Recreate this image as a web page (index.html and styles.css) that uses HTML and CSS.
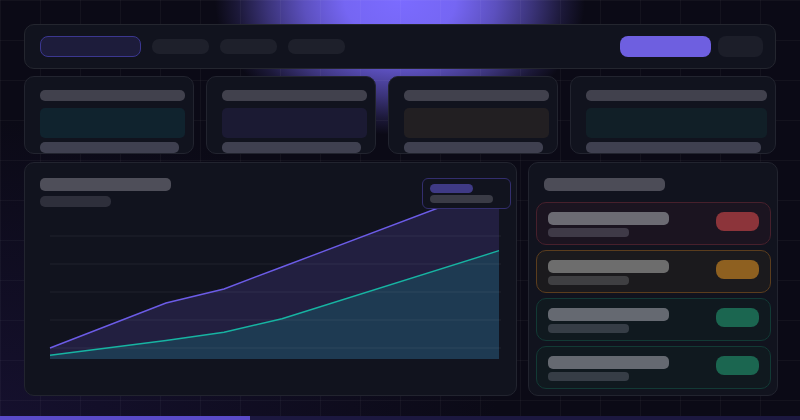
FILE: index.html
```html
<!DOCTYPE html>
<html lang="en">
<head>
<meta charset="utf-8">
<title>Dashboard</title>
<link rel="stylesheet" href="styles.css">
</head>
<body>
<div class="page">
  <header class="topbar">
    <div class="brand"></div>
    <nav class="nav">
      <span class="nav-pill"></span>
      <span class="nav-pill"></span>
      <span class="nav-pill"></span>
    </nav>
    <div class="actions">
      <span class="btn-primary"></span>
      <span class="btn-ghost"></span>
    </div>
  </header>

  <section class="stats">
    <div class="stat">
      <div class="stat-title"></div>
      <div class="stat-block teal"></div>
      <div class="stat-foot"></div>
    </div>
    <div class="stat">
      <div class="stat-title"></div>
      <div class="stat-block indigo"></div>
      <div class="stat-foot"></div>
    </div>
    <div class="stat">
      <div class="stat-title"></div>
      <div class="stat-block brown"></div>
      <div class="stat-foot"></div>
    </div>
    <div class="stat">
      <div class="stat-title"></div>
      <div class="stat-block green"></div>
      <div class="stat-foot"></div>
    </div>
  </section>

  <section class="lower">
    <div class="panel chart-panel">
      <div class="chart-title"></div>
      <div class="chart-sub"></div>
      <svg class="chart" width="450" height="152" viewBox="0 0 450 152">
        <polygon class="area-purple" points="0,141 116,96 174,82 232,60 449,-22 449,152 0,152"/>
        <polygon class="area-teal" points="0,148.3 116,133.5 174,125.3 232,111.7 449,43.7 449,152 0,152"/>
        <g class="grid">
          <line x1="0" y1="29" x2="451" y2="29"/>
          <line x1="0" y1="57" x2="451" y2="57"/>
          <line x1="0" y1="85" x2="451" y2="85"/>
          <line x1="0" y1="113" x2="451" y2="113"/>
          <line x1="0" y1="141" x2="451" y2="141"/>
        </g>
        <polyline class="line-purple" points="0,141 116,96 174,82 232,60 449,-22"/>
        <polyline class="line-teal" points="0,148.3 116,133.5 174,125.3 232,111.7 449,43.7"/>
      </svg>
      <div class="legend">
        <span class="legend-pill"></span>
        <span class="legend-bar"></span>
      </div>
    </div>

    <div class="panel list-panel">
      <div class="list-title"></div>
      <div class="items">
        <div class="item red">
          <div class="item-text"><span class="item-main"></span><span class="item-sub"></span></div>
          <span class="badge"></span>
        </div>
        <div class="item amber">
          <div class="item-text"><span class="item-main"></span><span class="item-sub"></span></div>
          <span class="badge"></span>
        </div>
        <div class="item mint">
          <div class="item-text"><span class="item-main"></span><span class="item-sub"></span></div>
          <span class="badge"></span>
        </div>
        <div class="item mint">
          <div class="item-text"><span class="item-main"></span><span class="item-sub"></span></div>
          <span class="badge"></span>
        </div>
      </div>
    </div>
  </section>

  <div class="progress"><div class="progress-fill"></div></div>
</div>
</body>
</html>
```

FILE: styles.css
```css
* { box-sizing: border-box; }

html, body {
  margin: 0;
  width: 800px;
  height: 420px;
  overflow: hidden;
}

body {
  font-family: "Inter", "Liberation Sans", sans-serif;
  background-color: #0b0a16;
  background-image:
    linear-gradient(to right, rgba(255,255,255,0.035) 1px, transparent 1px),
    linear-gradient(to bottom, rgba(255,255,255,0.035) 1px, transparent 1px),
    radial-gradient(ellipse 185px 135px at 400px 0px,
      #7b6bff 0%, rgba(123,107,255,0.95) 30%, rgba(123,107,255,0.72) 52%,
      rgba(123,107,255,0.42) 72%, rgba(123,107,255,0.15) 88%, rgba(123,107,255,0) 100%),
    radial-gradient(ellipse 500px 300px at 0px 420px, rgba(40,28,90,0.35), rgba(40,28,90,0));
  background-size: 40px 40px, 40px 40px, 100% 100%, 100% 100%;
  background-position: 0 0, 0 0, 0 0, 0 0;
  background-repeat: repeat, repeat, no-repeat, no-repeat;
}

.page {
  padding: 24px 0 0 24px;
  width: 776px;
}

/* ---------- header ---------- */
.topbar {
  height: 45px;
  display: flex;
  align-items: center;
  padding: 0 12px 0 15px;
  background: #11131e;
  border: 1px solid #24262f;
  border-radius: 10px;
}
.brand {
  width: 101px;
  height: 21px;
  background: #1d1c3b;
  border: 1px solid #3b3790;
  border-radius: 8px;
}
.nav {
  display: flex;
  gap: 11px;
  margin-left: 11px;
}
.nav-pill {
  width: 57px;
  height: 15px;
  background: #1e202b;
  border-radius: 7px;
}
.actions {
  margin-left: auto;
  display: flex;
  gap: 7px;
}
.btn-primary {
  width: 91px;
  height: 21px;
  background: #6e5fe0;
  border-radius: 8px;
}
.btn-ghost {
  width: 45px;
  height: 21px;
  background: #1c1e29;
  border-radius: 8px;
}

/* ---------- stat cards ---------- */
.stats {
  margin-top: 7px;
  display: grid;
  grid-template-columns: 170px 170px 170px 206px;
  gap: 12px;
}
.stat {
  height: 78px;
  background: #11131e;
  border: 1px solid #22242f;
  border-radius: 10px;
  padding: 13px 8px 0 15px;
  display: flex;
  flex-direction: column;
}
.stat-title {
  height: 13px;
  background: #41414d;
  border-radius: 5px;
}
.stat-block {
  height: 36px;
  margin-top: 7px;
  border-radius: 5px;
}
.stat-block.teal { background: #10232e; }
.stat-block.indigo { background: #1b1a33; }
.stat-block.brown { background: #221f22; }
.stat-block.green { background: #111f27; }
.stat-foot {
  flex: none;
  height: 11px;
  margin-top: 4px;
  margin-right: 6px;
  background: rgba(110,110,130,0.5);
  border-radius: 5px;
}

/* ---------- lower ---------- */
.lower {
  margin-top: 8px;
  display: grid;
  grid-template-columns: 493px 250px;
  gap: 11px;
}
.panel {
  height: 234px;
  background: #11131e;
  border: 1px solid #22242f;
  border-radius: 10px;
}

.chart-panel {
  position: relative;
  padding: 15px 15px 0 15px;
}
.chart-title {
  width: 131px;
  height: 13px;
  background: #4e4e59;
  border-radius: 5px;
}
.chart-sub {
  width: 71px;
  height: 11px;
  margin-top: 5px;
  background: #2e2f3b;
  border-radius: 5px;
}
.chart {
  display: block;
  margin-left: 10px;
  overflow: visible;
}
.area-purple { fill: #221f40; }
.area-teal { fill: #1e3a52; }
.grid line { stroke: rgba(255,255,255,0.065); stroke-width: 1.2; }
.line-purple { fill: none; stroke: #6c5ce7; stroke-width: 1.4; }
.line-teal { fill: none; stroke: #17b4a2; stroke-width: 1.4; }

.legend {
  position: absolute;
  top: 15px;
  right: 5px;
  width: 89px;
  height: 31px;
  background: #11131e;
  border: 1px solid #332e6e;
  border-radius: 6px;
  padding: 5px 7px;
  display: flex;
  flex-direction: column;
  gap: 2px;
}
.legend-pill {
  width: 43px;
  height: 11px;
  background: #3f3a85;
  border-radius: 5px;
}
.legend-bar {
  width: 63px;
  height: 9px;
  background: #3a3b46;
  border-radius: 4px;
}

/* ---------- list ---------- */
.list-panel {
  padding: 15px 6px 0 7px;
}
.list-title {
  width: 121px;
  height: 13px;
  margin-left: 8px;
  background: #4c4c57;
  border-radius: 5px;
}
.items {
  margin-top: 11px;
  display: flex;
  flex-direction: column;
  gap: 5px;
}
.item {
  height: 43px;
  border: 1px solid;
  border-radius: 10px;
  padding: 9px 11px 0 11px;
  display: flex;
  justify-content: space-between;
  align-items: flex-start;
}
.item-text {
  display: flex;
  flex-direction: column;
  gap: 3px;
}
.item-main {
  width: 121px;
  height: 13px;
  border-radius: 5px;
}
.item-sub {
  width: 81px;
  height: 9px;
  border-radius: 4px;
}
.badge {
  width: 43px;
  height: 19px;
  border-radius: 8px;
}
.item.red { background: #1b1420; border-color: #47202c; }
.item.red .item-main { background: #6c6b73; }
.item.red .item-sub { background: #3f3a47; }
.item.red .badge { background: #8c343a; }

.item.amber { background: #1b1a1d; border-color: #5b3d1d; }
.item.amber .item-main { background: #6d6d6d; }
.item.amber .item-sub { background: #3f3f42; }
.item.amber .badge { background: #8e6020; }

.item.mint { background: #10191f; border-color: #123a35; }
.item.mint .item-main { background: #656971; }
.item.mint .item-sub { background: #363d46; }
.item.mint .badge { background: #1b6650; }

/* ---------- bottom progress ---------- */
.progress {
  margin-top: 20px;
  margin-left: -24px;
  width: 800px;
  height: 4px;
  background: #1c1840;
}
.progress-fill {
  width: 250px;
  height: 4px;
  background: #5a4bc8;
}
```
